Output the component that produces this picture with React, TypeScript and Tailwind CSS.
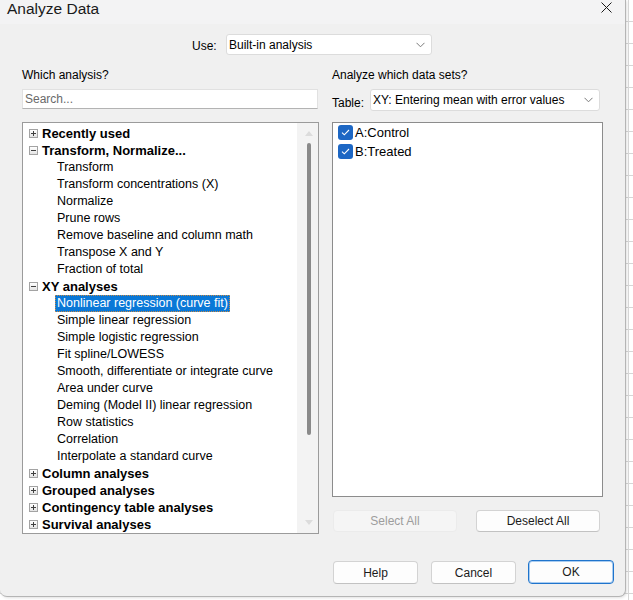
import React from "react";

type Row = { label: string; kind: "open" | "closed" | "item"; selected?: boolean };

const treeRows: Row[] = [
  { label: "Recently used", kind: "closed" },
  { label: "Transform, Normalize...", kind: "open" },
  { label: "Transform", kind: "item" },
  { label: "Transform concentrations (X)", kind: "item" },
  { label: "Normalize", kind: "item" },
  { label: "Prune rows", kind: "item" },
  { label: "Remove baseline and column math", kind: "item" },
  { label: "Transpose X and Y", kind: "item" },
  { label: "Fraction of total", kind: "item" },
  { label: "XY analyses", kind: "open" },
  { label: "Nonlinear regression (curve fit)", kind: "item", selected: true },
  { label: "Simple linear regression", kind: "item" },
  { label: "Simple logistic regression", kind: "item" },
  { label: "Fit spline/LOWESS", kind: "item" },
  { label: "Smooth, differentiate or integrate curve", kind: "item" },
  { label: "Area under curve", kind: "item" },
  { label: "Deming (Model II) linear regression", kind: "item" },
  { label: "Row statistics", kind: "item" },
  { label: "Correlation", kind: "item" },
  { label: "Interpolate a standard curve", kind: "item" },
  { label: "Column analyses", kind: "closed" },
  { label: "Grouped analyses", kind: "closed" },
  { label: "Contingency table analyses", kind: "closed" },
  { label: "Survival analyses", kind: "closed" },
];

function ExpandBox({ open }: { open: boolean }) {
  return (
    <div className="w-[9px] h-[9px] border border-[#a3a3a3] bg-gradient-to-b from-white to-[#e4e4e4] flex items-center justify-center shrink-0">
      <svg width="7" height="7" viewBox="0 0 7 7">
        <rect x="1" y="3" width="5" height="1" fill="#404040" />
        {!open && <rect x="3" y="1" width="1" height="5" fill="#404040" />}
      </svg>
    </div>
  );
}

function Chevron() {
  return (
    <svg width="9" height="6" viewBox="0 0 9 6" className="shrink-0">
      <path d="M0.5 0.8 L4.5 4.8 L8.5 0.8" fill="none" stroke="#7a7a7a" strokeWidth="1" />
    </svg>
  );
}

function Combo({ text, className }: { text: string; className: string }) {
  return (
    <div
      className={`flex items-center justify-between bg-white border border-[#dcdcdc] rounded-[3px] pl-[2px] pr-[6px] text-[12px] text-black ${className}`}
    >
      <span className="leading-[14px]">{text}</span>
      <Chevron />
    </div>
  );
}

function CheckBox() {
  return (
    <div className="w-[15px] h-[15px] rounded-[3px] bg-[#1d67c4] flex items-center justify-center shrink-0">
      <svg width="9" height="7" viewBox="0 0 9 7">
        <path d="M1 3.6 L3.3 5.8 L8 1" fill="none" stroke="white" strokeWidth="1.1" />
      </svg>
    </div>
  );
}

function Button({
  label,
  className,
  disabled,
  primary,
}: {
  label: string;
  className: string;
  disabled?: boolean;
  primary?: boolean;
}) {
  const tone = disabled
    ? "bg-[#f5f5f5] border-[#ebebeb] text-[#9d9d9d]"
    : primary
    ? "bg-[#fdfdfd] border-[#1f74cc] text-[#1b1b1b] shadow-[inset_0_0_0_1px_#a9ccf0]"
    : "bg-[#fdfdfd] border-[#d3d3d3] border-b-[#c2c2c2] text-[#1b1b1b]";
  return (
    <div className={`flex items-center justify-center rounded-[4px] border text-[12px] ${tone} ${className}`}>
      {label}
    </div>
  );
}

export default function App() {
  return (
    <div className="w-[633px] h-[600px] flex items-start bg-white bg-[repeating-linear-gradient(to_bottom,transparent_0px,transparent_21px,#d6d6d6_21px,#d6d6d6_22px)] font-['Liberation_Sans',Arial,sans-serif] overflow-hidden">
      {/* dialog window */}
      <div className="w-[626px] h-[597px] shrink-0 flex flex-col bg-[#f0f0f0] border-r border-b border-[#b5b5b5] rounded-b-[7px] overflow-hidden shadow-[1px_1px_3px_rgba(0,0,0,0.12)]">
        {/* title bar */}
        <div className="h-[24px] bg-[#f3f3f4] flex items-start justify-between pl-[7px] pr-[13px]">
          <span className="text-[15.5px] leading-[17px] text-[#1a1a1a]">Analyze Data</span>
          <svg width="11" height="11" viewBox="0 0 11 11" className="mt-[2px]">
            <path d="M0.5 0.5 L10.5 10.5 M10.5 0.5 L0.5 10.5" stroke="#1a1a1a" strokeWidth="1" />
          </svg>
        </div>

        {/* analysis source */}
        <div className="mt-[10px] h-[21px] flex items-center pl-[192px]">
          <span className="w-[34px] text-[12px] text-black leading-[14px] pt-[2px]">Use:</span>
          <Combo text="Built-in analysis" className="w-[206px] h-[21px]" />
        </div>

        {/* two panes */}
        <div className="mt-[12px] flex pl-[22px] gap-[14px]">
          {/* left pane */}
          <div className="w-[296px] flex flex-col">
            <div className="h-[16px] leading-[16px] text-[12px] text-black">Which analysis?</div>
            <div className="mt-[6px] h-[20px] bg-white border border-[#e1e1e1] border-b-[#b3b3b3] flex items-center pl-[2px] text-[12px] text-[#6a6a6a]">
              Search...
            </div>
            <div className="mt-[13px] h-[412px] w-[297px] bg-white border border-[#9b9b9b] flex">
              <div className="flex-1 pt-[2px] overflow-hidden">
                {treeRows.map((r) =>
                  r.kind === "item" ? (
                    <div key={r.label} className="h-[17px] flex items-center pl-[32px]">
                      <span
                        className={`px-[2px] h-[17px] leading-[17px] text-[12.5px] whitespace-nowrap ${
                          r.selected
                            ? "bg-[#0a78d7] text-white outline-1 outline-dotted outline-[#c98a45] -outline-offset-1"
                            : "text-black"
                        }`}
                      >
                        {r.label}
                      </span>
                    </div>
                  ) : (
                    <div key={r.label} className="h-[17px] flex items-center pl-[6px]">
                      <ExpandBox open={r.kind === "open"} />
                      <span className="ml-[4px] leading-[17px] text-[13px] font-bold text-black whitespace-nowrap">
                        {r.label}
                      </span>
                    </div>
                  )
                )}
              </div>
              {/* vertical scrollbar */}
              <div className="w-[21px] h-full bg-[#f3f3f3] flex flex-col items-center pl-[2px]">
                <svg width="8" height="5" viewBox="0 0 8 5" className="mt-[8px]">
                  <path d="M0 5 L4 0 L8 5 Z" fill="#dcdcdc" />
                </svg>
                <div className="mt-[7px] w-[4px] h-[292px] rounded-full bg-[#8a8a8a]" />
                <div className="flex-1" />
                <svg width="8" height="5" viewBox="0 0 8 5" className="mb-[8px]">
                  <path d="M0 0 L4 5 L8 0 Z" fill="#dcdcdc" />
                </svg>
              </div>
            </div>
          </div>

          {/* right pane */}
          <div className="w-[271px] flex flex-col">
            <div className="h-[16px] leading-[16px] text-[12px] text-black">Analyze which data sets?</div>
            <div className="mt-[6px] h-[22px] flex items-center">
              <span className="w-[38px] text-[12px] text-black leading-[14px] pt-[5px]">Table:</span>
              <Combo text="XY: Entering mean with error values" className="w-[230px] h-[22px]" />
            </div>
            <div className="mt-[11px] h-[375px] bg-white border border-[#8c8c8c] pl-[5px] flex flex-col">
              {["A:Control", "B:Treated"].map((n) => (
                <div key={n} className="h-[19px] flex items-center">
                  <CheckBox />
                  <span className="ml-[2px] text-[13px] text-black leading-[16px]">{n}</span>
                </div>
              ))}
            </div>
            <div className="mt-[13px] flex gap-[19px] pl-[1px]">
              <Button label="Select All" disabled className="w-[124px] h-[22px]" />
              <Button label="Deselect All" className="w-[124px] h-[22px]" />
            </div>
          </div>
        </div>

        {/* dialog buttons */}
        <div className="mt-[27px] flex pl-[333px]">
          <Button label="Help" className="w-[85px] h-[23px]" />
          <Button label="Cancel" className="ml-[13px] w-[85px] h-[23px]" />
          <Button label="OK" primary className="ml-[12px] w-[86px] h-[24px] -mt-[1px]" />
        </div>
      </div>
      <div className="ml-[2px] h-full flex-1 border-l border-[#d6d6d6]" />
    </div>
  );
}
